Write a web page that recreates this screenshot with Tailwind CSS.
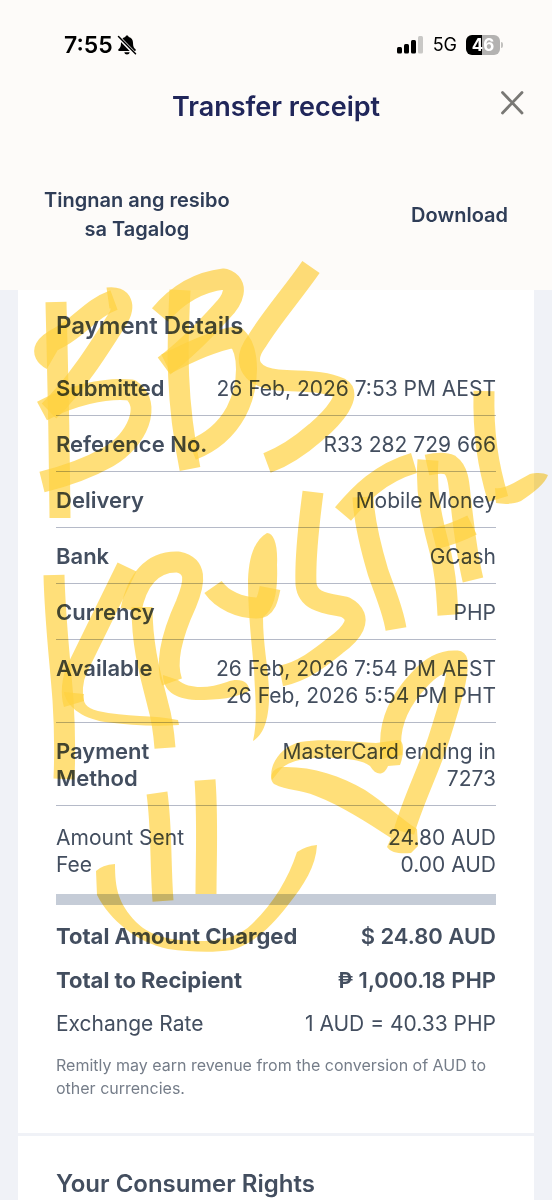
<!DOCTYPE html>
<html lang="en">
<head>
  <meta charset="UTF-8" />
  <title>Transfer receipt</title>
  <meta name="viewport" content="width=device-width, initial-scale=1.0" />
  <script src="https://cdn.jsdelivr.net/npm/@tailwindcss/browser@4"></script>
</head>
<body class="bg-[#f0f2f7] font-['Inter','Roboto',sans-serif] text-[#434e5f]">
  <div class="relative min-h-screen flex flex-col overflow-hidden">

    <header class="bg-[#fdfbf9] pt-[31px] pb-[46px]">
      <!-- Status bar -->
      <div class="flex items-center justify-between h-7 pl-16 pr-[49px] text-black">
        <div class="flex items-center gap-1">
          <span class="text-[23px] font-semibold">7:55</span>
          <svg class="w-5 h-5" viewBox="0 0 20 20" fill="none">
            <path d="M10 .5c1 0 1.600.6 1.700 1.500 2.800.7 4.300 2.900 4.300 5.700 0 3.800.9 5.100 2.500 6.600.7.700.300 1.700-.700 1.700H2.200c-1 0-1.400-1-.700-1.700C3.100 12.800 4 11.500 4 7.700 4 4.900 5.500 2.700 8.300 2 8.400 1.100 9 .5 10 .5z" fill="#000" />
            <path d="M7.300 17.300h5.400c-.4 1.400-1.300 2.200-2.700 2.200s-2.300-.8-2.700-2.200z" fill="#000" />
            <path d="M1 1.500l17.500 18" stroke="#fdfbf9" stroke-width="3.600" />
            <path d="M1.500 1.500l17 17.300" stroke="#000" stroke-width="1.500" stroke-linecap="round" />
          </svg>
        </div>
        <div class="flex items-center gap-[9px]">
          <svg class="w-[27px] h-[18px]" viewBox="0 0 27 18">
            <rect x="0" y="11" width="5" height="6.500" rx="1.500" />
            <rect x="7" y="8" width="5" height="9.500" rx="1.500" />
            <rect x="14" y="4" width="5" height="13.500" rx="1.500" />
            <rect x="21" y="0" width="5" height="17.500" rx="1.500" fill="#c9c8c6" />
          </svg>
          <span class="text-lg">5G</span>
          <div class="flex items-center gap-px">
            <div class="w-[34px] h-5 rounded-md bg-linear-to-r from-black from-48% to-[#b3b2b1] to-48% text-white text-[17px] leading-5 font-bold text-center">46</div>
            <div class="w-0.5 h-1.5 rounded-r bg-[#c2c1bf]"></div>
          </div>
        </div>
      </div>

      <div class="relative flex justify-center mt-7">
        <h1 class="text-[27px] leading-[39px] font-semibold text-[#20265a]">Transfer receipt</h1>
        <button aria-label="Close" class="absolute right-7 top-1 text-[#797875]">
          <svg class="w-6 h-6" viewBox="0 0 24 24" fill="none" stroke="currentColor" stroke-width="2.800" stroke-linecap="round">
            <path d="M2.500 1.500l19.500 20.500M22 1.500l-19.500 20.500" />
          </svg>
        </button>
      </div>

      <div class="flex items-center justify-between mt-[60px] px-11 text-xl leading-[29px] font-semibold text-[#2f3d57]">
        <button class="text-center">Tingnan ang resibo<br>sa Tagalog</button>
        <button>Download</button>
      </div>
    </header>

    <main class="grow flex flex-col gap-[3px] px-[18px]">
      <section class="bg-white px-[38px] pt-5 pb-[33px]">
        <h2 class="text-2xl leading-8 font-semibold mb-[18px]">Payment Details</h2>

        <table class="w-full text-[21px] leading-[27px]">
          <tbody>
            <tr class="border-b border-[#b5bac8] align-top">
              <th class="pt-[15px] pb-[13px] text-left text-[22px] font-semibold">Submitted</th>
              <td class="pt-[15px] pb-[13px] text-right">26 Feb, 2026 7:53 PM AEST</td>
            </tr>
            <tr class="border-b border-[#b5bac8] align-top">
              <th class="pt-[15px] pb-[13px] text-left text-[22px] font-semibold">Reference No.</th>
              <td class="pt-[15px] pb-[13px] text-right">R33 282 729 666</td>
            </tr>
            <tr class="border-b border-[#b5bac8] align-top">
              <th class="pt-[15px] pb-[13px] text-left text-[22px] font-semibold">Delivery</th>
              <td class="pt-[15px] pb-[13px] text-right">Mobile Money</td>
            </tr>
            <tr class="border-b border-[#b5bac8] align-top">
              <th class="pt-[15px] pb-[13px] text-left text-[22px] font-semibold">Bank</th>
              <td class="pt-[15px] pb-[13px] text-right">GCash</td>
            </tr>
            <tr class="border-b border-[#b5bac8] align-top">
              <th class="pt-[15px] pb-[13px] text-left text-[22px] font-semibold">Currency</th>
              <td class="pt-[15px] pb-[13px] text-right">PHP</td>
            </tr>
            <tr class="border-b border-[#b5bac8] align-top">
              <th class="pt-[15px] pb-[13px] text-left text-[22px] font-semibold">Available</th>
              <td class="pt-[15px] pb-[13px] text-right">26 Feb, 2026 7:54 PM AEST<br>26 Feb, 2026 5:54 PM PHT</td>
            </tr>
            <tr class="border-b border-[#b5bac8] align-top">
              <th class="pt-[15px] pb-[13px] text-left text-[22px] font-semibold">Payment<br>Method</th>
              <td class="pt-[15px] pb-[13px] text-right">MasterCard ending in<br>7273</td>
            </tr>
          </tbody>
        </table>

        <table class="w-full mt-[18px] text-[21px] leading-[27px]">
          <tbody>
            <tr>
              <th class="text-left font-normal">Amount Sent</th>
              <td class="text-right">24.80 AUD</td>
            </tr>
            <tr>
              <th class="text-left font-normal">Fee</th>
              <td class="text-right">0.00 AUD</td>
            </tr>
          </tbody>
        </table>

        <div class="h-[11px] mt-4 bg-[#c5ccd7]"></div>

        <table class="w-full mt-[9px] text-[21px] leading-7">
          <tbody>
            <tr class="text-[22px] font-semibold">
              <th class="py-2 text-left">Total Amount Charged</th>
              <td class="py-2 text-right">$ 24.80 AUD</td>
            </tr>
            <tr class="text-[22px] font-semibold">
              <th class="py-2 text-left">Total to Recipient</th>
              <td class="py-2 text-right">₱ 1,000.18 PHP</td>
            </tr>
            <tr>
              <th class="py-2 text-left font-normal">Exchange Rate</th>
              <td class="py-2 text-right">1 AUD = 40.33 PHP</td>
            </tr>
          </tbody>
        </table>

        <p class="mt-2 text-base leading-[23px] text-[#757d89]">Remitly may earn revenue from the conversion of AUD to other currencies.</p>
      </section>

      <section class="grow bg-white px-[38px] pt-8">
        <h2 class="text-2xl leading-8 font-semibold">Your Consumer Rights</h2>
      </section>
    </main>

    <!-- Marker drawing on top of the receipt -->
    <svg class="absolute top-0 left-0 w-full pointer-events-none mix-blend-multiply" viewBox="0 0 552 1200" fill="none" stroke-width="21" stroke-linejoin="round" aria-hidden="true">
      <g stroke="#ffd240" stroke-opacity=".7">
        <path d="M56 302C57 350 59 400 60 518" />
        <path d="M52 360C38 352 46 344 60 337C80 326 92 308 114 300" />
        <path d="M108 298C122 296 126 306 117 320C98 350 76 385 49 411" />
        <path d="M42 411C70 396 105 387 131 390C152 404 138 440 108 457C85 470 62 477 42 482" />
        <path d="M180 290C177 350 176 400 190 469" />
        <path d="M160 315C176 296 198 282 224 279C240 284 233 300 222 311C205 330 188 348 164 366" />
        <path d="M166 364C190 352 215 340 236 337C250 350 250 385 236 412C225 432 210 443 192 450" />
        <path d="M311 267C293 293 271 318 257 341C240 364 254 378 278 380C303 382 322 380 340 388C352 395 334 417 316 432C300 446 286 456 267 463" />
        <path d="M54 575C55 620 60 660 63 700C65 730 65 755 64 779" />
        <path d="M127 567C112 598 91 640 77 669C72 680 71 694 74 704" />
        <path d="M142 607C142 650 152 680 158 705C163 722 164 735 165 748" />
        <path d="M131 610C137 580 152 561 178 562C196 566 196 580 186 604C175 628 164 660 172 682" />
        <path d="M213 587C222 600 240 608 257 608C266 608 268 598 270 588" />
        <path d="M313 492C308 530 305 560 306 584C308 602 325 603 345 607C366 618 350 635 336 645C320 658 302 672 281 676" />
        <path d="M343 514C360 494 380 473 414 463" />
        <path d="M363 497C364 520 370 545 378 572C386 595 393 610 396 629" />
        <path d="M428 460C425 500 435 530 441 555C447 580 447 600 448 615" />
        <path d="M427 465C436 463 444 462 450 465C460 472 459 490 461 503C464 530 467 555 473 580" />
        <path d="M434 539C446 536 460 531 472 525" />
        <path d="M484 391C483 435 488 465 498 499" />
        <path d="M392 757C386 725 400 700 419 680C431 666 443 660 457 661C459 675 450 703 440 735C430 768 413 800 404 832" />
        <path d="M157 793C162 830 160 860 163 901" />
        <path d="M205 780C208 820 206 860 206 894" />
      </g>

      <!-- strokes whose width changes along the line -->
      <g fill="#ffd240" fill-opacity=".7">
        <path d="M64 692C66 705 80 718 105 722C130 725 155 727 179 725L178 720C155 715 125 717 98 711C86 708 82 702 84 694z" />
        <path d="M163 675C163 690 174 699 196 700C220 700 235 698 249 691C250 682 240 677 227 682C210 688 190 690 178 680z" />
        <path d="M267 533C274 533 278 545 277 565C278 590 275 609 263 617C263 645 268 665 269 690C270 722 262 736 253 741C258 720 255 695 254 670C252 645 248 615 248 580C249 555 255 540 267 533z" />
        <path d="M495 488C505 490 520 479 530 474C538 472 544 473 548 475C545 484 534 492 521 501C512 505 502 504 496 503z" />
        <path d="M398 740C405 740 404 755 400 765L388 766C384 776 376 776 370 766C362 760 350 759 334 758C310 757 288 760 280 770L272 780C268 766 280 747 300 742C325 738 350 742 376 743z" />
        <path d="M282 767C310 766 340 775 365 790C385 803 400 818 417 829L418 846L411 853C400 854 391 853 387 847L391 838C366 822 342 806 316 796C300 789 287 791 274 784C268 778 272 768 282 767z" />
        <path d="M96 871Q102 865 115 864C115 888 118 903 136 922C152 938 176 941 200 941C222 942 240 936 252 924C272 905 288 880 297 852Q306 846 317 845C316 866 304 885 288 905C270 929 250 945 232 950C212 953 190 952 168 949C136 942 110 920 97 895z" />
      </g>
    </svg>

  </div>
</body>
</html>
